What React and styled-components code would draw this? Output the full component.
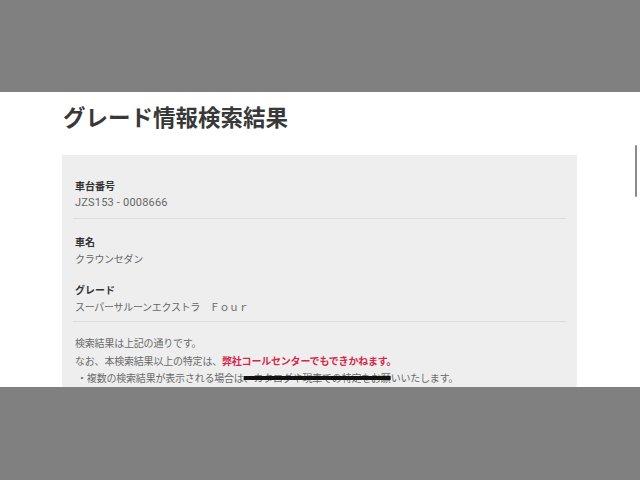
import React from "react";
import styled, { createGlobalStyle } from "styled-components";

const GlobalStyle = createGlobalStyle`
  html, body {
    margin: 0;
    padding: 0;
    background: #808080;
  }
  body {
    font-family: "Noto Sans CJK JP", "Noto Sans", sans-serif;
  }
`;

const Screen = styled.div`
  position: relative;
  margin-top: 92px;
  height: 295px;
  background: #ffffff;
  overflow: hidden;
  padding: 9px 0 0 62px;
  box-sizing: border-box;
`;

const Title = styled.h1`
  margin: 0 0 24px 1px;
  font-size: 22.5px;
  line-height: 30px;
  font-weight: 700;
  color: #383838;
  letter-spacing: 0;
`;

const Panel = styled.div`
  width: 515px;
  background: #eeeeee;
  padding: 0 11px 20px;
  box-sizing: border-box;
`;

const Field = styled.div`
  padding: ${(p) => p.$top}px 2px ${(p) => p.$bottom}px;
  border-bottom: ${(p) => (p.$rule ? "1px solid #dddddd" : "none")};
`;

const Label = styled.div`
  font-size: 10px;
  line-height: 14px;
  font-weight: 700;
  color: #333333;
`;

const Value = styled.div`
  margin-top: 3px;
  font-family: ${(p) => (p.$latin ? '"Roboto", "Noto Sans CJK JP", sans-serif' : "inherit")};
  font-size: ${(p) => (p.$latin ? "11px" : "10px")};
  line-height: 14px;
  color: #666666;
  letter-spacing: ${(p) => (p.$latin ? "0.2px" : "-0.3px")};
`;

const Notes = styled.div`
  padding: 12px 2px 0;
  font-size: 10px;
  line-height: 17.5px;
  color: #6a6a6a;
  letter-spacing: -0.2px;
`;

const Line = styled.div`
  white-space: nowrap;
`;

const Red = styled.span`
  color: #d8264a;
  font-weight: 700;
`;

const Scribble = styled.span`
  text-decoration: line-through;
  text-decoration-color: #111111;
  text-decoration-thickness: 4px;
  text-decoration-skip-ink: none;
`;

const ScrollThumb = styled.div`
  position: absolute;
  right: 3px;
  top: 53px;
  width: 2px;
  height: 52px;
  border-radius: 1px;
  background: #8a8a8a;
`;

export default function App() {
  return (
    <>
      <GlobalStyle />
      <Screen>
        <Title>グレード情報検索結果</Title>
        <Panel>
          <Field $top={24} $bottom={8} $rule>
            <Label>車台番号</Label>
            <Value $latin>JZS153 - 0008666</Value>
          </Field>
          <Field $top={16} $bottom={0}>
            <Label>車名</Label>
            <Value>クラウンセダン</Value>
          </Field>
          <Field $top={17} $bottom={7} $rule>
            <Label>グレード</Label>
            <Value>スーパーサルーンエクストラ　Ｆｏｕｒ</Value>
          </Field>
          <Notes>
            <Line>検索結果は上記の通りです。</Line>
            <Line>
              なお、本検索結果以上の特定は、<Red>弊社コールセンターでもできかねます。</Red>
            </Line>
            <Line>
              &nbsp;・複数の検索結果が表示される場合は<Scribble>、カタログや現車での特定をお願</Scribble>いいたします。
            </Line>
          </Notes>
        </Panel>
        <ScrollThumb />
      </Screen>
    </>
  );
}
